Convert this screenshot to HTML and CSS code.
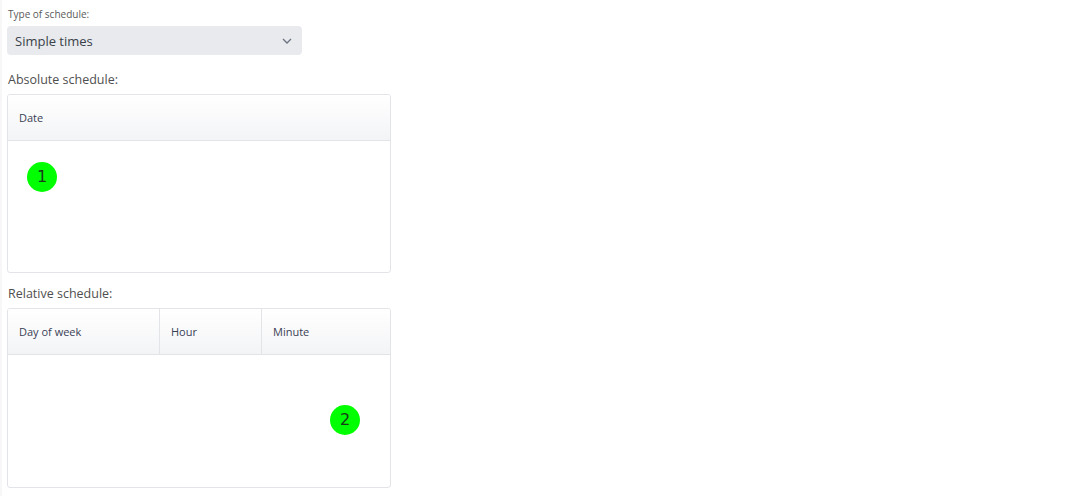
FILE: index.html
```html
<!DOCTYPE html>
<html>
<head>
<meta charset="utf-8">
<link rel="stylesheet" href="styles.css">
</head>
<body>
<div class="page">
  <div class="field">
    <label class="small-label">Type of schedule:</label>
    <div class="select">
      <span>Simple times</span>
      <svg class="chev" width="10" height="6" viewBox="0 0 10 6"><path d="M1 1 L5 5 L9 1" fill="none" stroke="#6b7280" stroke-width="1.3"/></svg>
    </div>
  </div>

  <div class="section first">
    <div class="section-label">Absolute schedule:</div>
    <div class="table">
      <div class="thead">
        <div class="th th-full">Date</div>
      </div>
      <div class="tbody">
        <span class="marker m1">1</span>
      </div>
    </div>
  </div>

  <div class="section second">
    <div class="section-label">Relative schedule:</div>
    <div class="table tall">
      <div class="thead">
        <div class="th c1">Day of week</div>
        <div class="th c2">Hour</div>
        <div class="th c3">Minute</div>
      </div>
      <div class="tbody">
        <span class="marker m2">2</span>
      </div>
    </div>
  </div>
</div>
</body>
</html>
```

FILE: styles.css
```css
html, body {
  margin: 0;
  padding: 0;
  background: #fff;
}
body {
  font-family: "Open Sans", "Noto Sans", sans-serif;
  color: #333;
  border-left: 2px solid #f7f7f8;
  min-height: 496px;
  box-sizing: border-box;
}
.page {
  padding: 7px 0 0 5px;
  width: 384px;
}
.field {
  display: flex;
  flex-direction: column;
}
.small-label {
  font-size: 10px;
  line-height: 14px;
  color: #5a5a5a;
  padding-left: 1px;
  margin-bottom: 5px;
}
.select {
  width: 295px;
  height: 29px;
  box-sizing: border-box;
  background: #e8eaee;
  border-radius: 4px;
  display: flex;
  align-items: center;
  justify-content: space-between;
  padding: 0 10px 0 8px;
  font-size: 13px;
  color: #3a3f48;
}
.chev { display: block; }
.section.first { margin-top: 16px; }
.section.second { margin-top: 12px; }
.section-label {
  font-size: 12.5px;
  line-height: 17px;
  color: #4f4f4f;
  padding-left: 1px;
  margin-bottom: 6px;
}
.table {
  border: 1px solid #e2e4e8;
  border-radius: 3px;
  height: 179px;
  box-sizing: border-box;
  display: flex;
  flex-direction: column;
  overflow: hidden;
}
.table.tall { height: 180px; }
.thead {
  display: flex;
  height: 46px;
  flex: none;
  background: linear-gradient(#ffffff, #f3f4f6);
  border-bottom: 1px solid #e2e4e8;
  box-sizing: border-box;
}
.th {
  display: flex;
  align-items: center;
  padding: 0 0 1px 11px;
  font-size: 11px;
  color: #3b3f55;
  box-sizing: border-box;
}
.th-full { flex: 1; }
.c1 { width: 152px; border-right: 1px solid #e2e4e8; }
.c2 { width: 102px; border-right: 1px solid #e2e4e8; }
.c3 { flex: 1; }
.tbody {
  flex: 1;
  position: relative;
}
.marker {
  position: absolute;
  width: 30px;
  height: 30px;
  border-radius: 50%;
  background: #00ff00;
  color: #1a3a1a;
  font-size: 16px;
  line-height: 30px;
  text-align: center;
  font-family: "DejaVu Sans", sans-serif;
}
.m1 { left: 19px; top: 21px; }
.m2 { left: 322px; top: 50px; }
```
